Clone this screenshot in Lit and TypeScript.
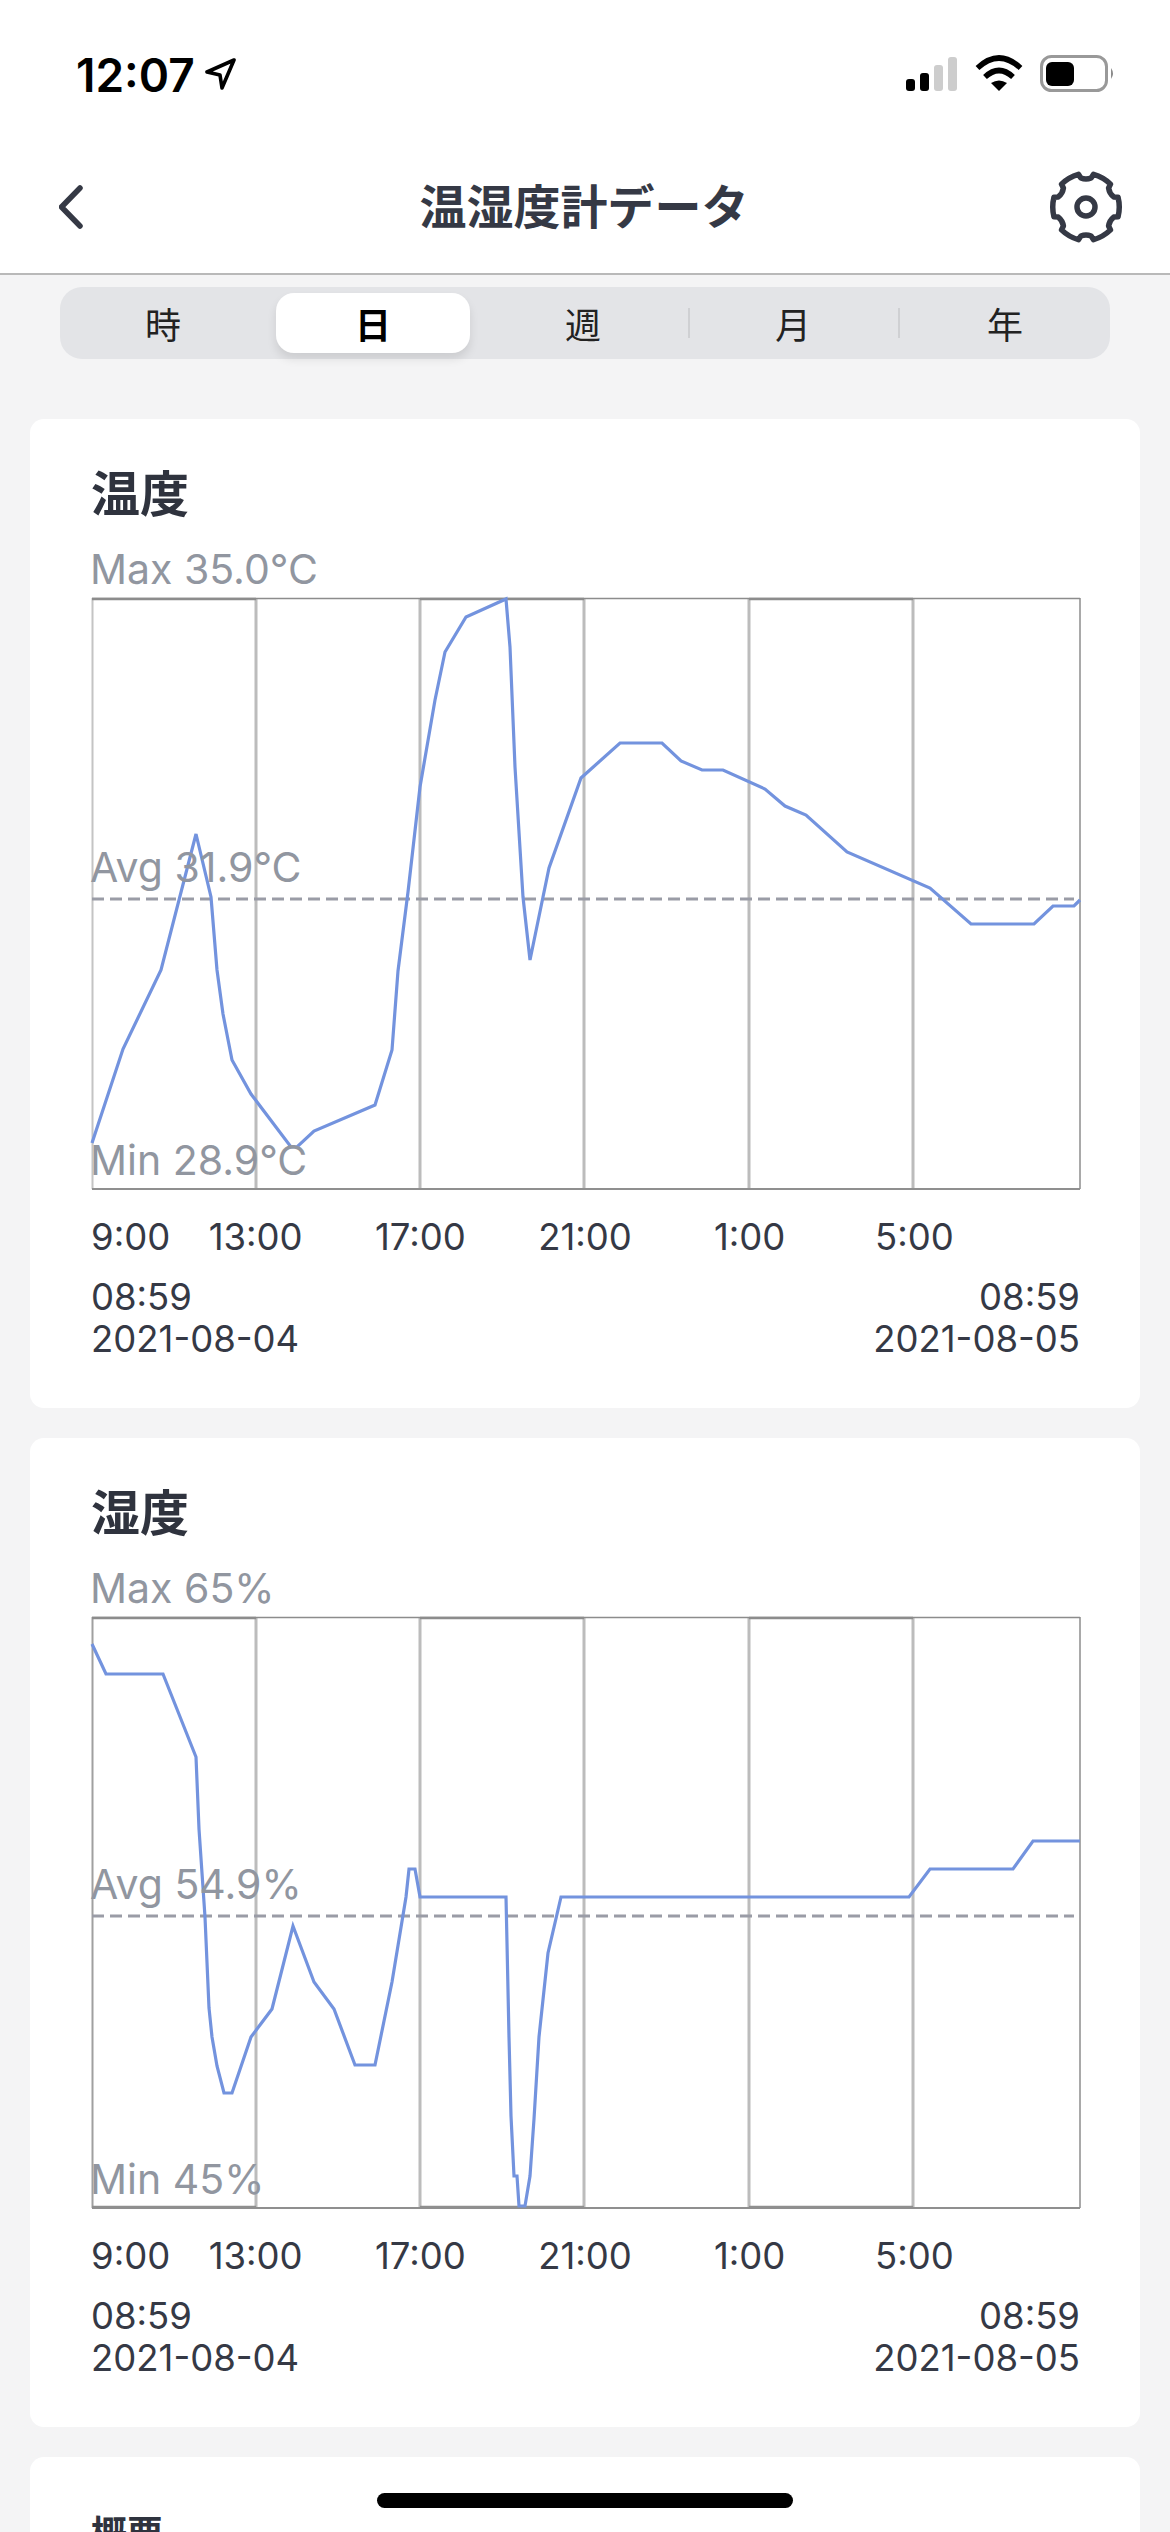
import { LitElement, html, css, svg } from 'lit';
import { customElement } from 'lit/decorators.js';

type Point = [number, number];

interface ChartData {
  title: string;
  max: string;
  avg: string;
  min: string;
  top: number; // y of the plot's top edge in the page
  avgY: number;
  heavyBottom: boolean;
  leftStroke: string;
  points: Point[];
  endDate: string;
}

const LEFT = 92;
const WIDTH = 988;
const HEIGHT = 591;
const GRID = [164, 328, 492, 657, 821];
const TICKS = ['9:00', '13:00', '17:00', '21:00', '1:00', '5:00'];
const SEGMENTS = ['時', '日', '週', '月', '年'];

const temperature: ChartData = {
  title: '温度',
  max: 'Max 35.0°C',
  avg: 'Avg 31.9°C',
  min: 'Min 28.9°C',
  top: 598,
  avgY: 301,
  heavyBottom: false,
  leftStroke: '#c4c4c4',
  endDate: '2021-08-05',
  points: [
    [92, 1143], [123, 1049], [161, 970], [196, 834], [211, 897], [217, 970], [223, 1014],
    [232, 1060], [251, 1094], [291, 1147], [297, 1147], [314, 1131], [375, 1105], [392, 1050],
    [398, 971], [408, 892], [420, 787], [435, 700], [445, 652], [466, 617], [506, 599],
    [510, 647], [515, 767], [523, 897], [530, 960], [543, 897], [549, 868], [581, 778],
    [620, 743], [662, 743], [681, 761], [702, 770], [723, 770], [765, 789], [785, 806],
    [806, 815], [847, 852], [930, 888], [971, 924], [1034, 924], [1053, 906], [1074, 906],
    [1080, 900],
  ],
};

const humidity: ChartData = {
  title: '湿度',
  max: 'Max 65%',
  avg: 'Avg 54.9%',
  min: 'Min 45%',
  top: 1618,
  avgY: 299,
  heavyBottom: true,
  leftStroke: '#a0a0a0',
  endDate: '2021-08-05',
  points: [
    [92, 1645], [106, 1675], [163, 1675], [196, 1758], [199, 1830], [205, 1918], [209, 2009],
    [212, 2038], [217, 2067], [224, 2094], [232, 2094], [251, 2038], [272, 2010], [293, 1927],
    [314, 1983], [334, 2010], [355, 2066], [375, 2066], [392, 1983], [406, 1898], [409, 1870],
    [415, 1870], [420, 1898], [506, 1898], [507, 1944], [509, 2038], [511, 2117], [514, 2177],
    [517, 2177], [519, 2207], [525, 2207], [530, 2177], [534, 2120], [539, 2038], [548, 1954],
    [561, 1898], [909, 1898], [930, 1870], [1013, 1870], [1033, 1842], [1080, 1842],
  ],
};

// six flat lobes with short, narrow scoops between them
function gearPath(cx: number, cy: number, outer: number, notch: number) {
  const at = (deg: number, r: number) => {
    const a = (deg * Math.PI) / 180;
    return `${(cx + r * Math.cos(a)).toFixed(2)} ${(cy + r * Math.sin(a)).toFixed(2)}`;
  };
  let d = `M${at(-17, outer)}`;
  for (let i = 0; i < 6; i++) {
    const a = i * 60;
    d += ` Q${at(a, outer + 1)} ${at(a + 17, outer)}`;
    d += ` L${at(a + 20, outer - 4)}`;
    d += ` Q${at(a + 30, notch)} ${at(a + 40, outer - 4)}`;
    d += ` L${at(a + 43, outer)}`;
  }
  return d + ' Z';
}

@customElement('app-root')
export class AppRoot extends LitElement {
  static styles = css`
    :host {
      display: block;
      position: relative;
      width: 1170px;
      height: 2532px;
      overflow: hidden;
      background: #f4f4f5;
      font-family: Inter, 'Noto Sans CJK JP', sans-serif;
      color: #353945;
    }

    .top {
      background: #fff;
      border-bottom: 2px solid #b9b9b9;
      height: 275px;
      box-sizing: border-box;
    }

    .status {
      display: flex;
      height: 120px;
      box-sizing: border-box;
      padding: 55px 55px 0 76px;
      color: #000;
    }

    .time {
      font-size: 46px;
      font-weight: 600;
      line-height: 36px;
      height: 36px;
      margin-top: 2px;
    }

    .arrow {
      margin: 3px 0 0 10px;
    }

    .status-right {
      display: flex;
      gap: 17px;
      margin-left: auto;
    }

    .nav {
      display: grid;
      grid-template-columns: 1fr auto 1fr;
      align-items: center;
      height: 153px;
      box-sizing: border-box;
      padding: 20px 47px 0 59px;
    }

    .nav-title {
      margin: 0 14px 5px 0;
      font-family: 'Noto Sans CJK JP', sans-serif;
      font-size: 47px;
      font-weight: 700;
      line-height: 60px;
    }

    .nav .gear {
      justify-self: end;
    }

    .segments {
      display: grid;
      grid-template-columns: repeat(5, 1fr);
      height: 72px;
      margin: 12px 60px 60px;
      background: #e3e4e7;
      border-radius: 22px;
    }

    .segment {
      position: relative;
      display: flex;
      align-items: center;
      justify-content: center;
      margin: 6px 10px 6px 6px;
      border-radius: 18px;
      font-family: 'Noto Sans CJK JP', sans-serif;
      font-size: 36px;
      color: #222;
    }

    .segment:last-child {
      margin-right: 6px;
    }

    .segment.active {
      background: #fff;
      font-weight: 700;
      color: #000;
      box-shadow: 0 6px 10px rgba(0, 0, 0, 0.1);
    }

    .segment.sep::before {
      content: '';
      position: absolute;
      left: -8px;
      top: 15px;
      width: 2px;
      height: 30px;
      background: #cfd0d3;
    }

    .card {
      margin: 0 30px 30px;
      padding: 42px 60px 48px 62px;
      background: #fff;
      border-radius: 14px;
    }

    .card-title {
      margin-left: -1px;
      font-family: 'Noto Sans CJK JP', sans-serif;
      font-size: 49px;
      font-weight: 700;
      line-height: 60px;
      color: #2f333e;
    }

    .card-title.small {
      margin-top: 2px;
      font-size: 36px;
    }

    .stat {
      font-size: 41px;
      line-height: 48px;
      color: #9196a0;
    }

    .max {
      margin: 24px 0 5px -2px;
    }

    .plot {
      position: relative;
      height: 591px;
    }

    .plot svg {
      display: block;
      overflow: visible;
    }

    .plot .stat {
      position: absolute;
      left: -2px;
    }

    .plot .min {
      bottom: 5px;
    }

    .ticks {
      display: grid;
      grid-template-columns: repeat(6, 1fr);
      margin-top: 27px;
      font-size: 36.5px;
      line-height: 43px;
    }

    .ticks span {
      justify-self: start;
      transform: translateX(calc(-50% - 1px));
    }

    .ticks span:first-child {
      margin-left: -1px;
      transform: none;
    }

    .range {
      display: flex;
      justify-content: space-between;
      margin: 17px 0 0 -1px;
      font-size: 36.5px;
      line-height: 42px;
    }

    .range div:last-child {
      text-align: right;
    }

    .home {
      position: absolute;
      left: 377px;
      top: 2493px;
      width: 416px;
      height: 15px;
      border-radius: 8px;
      background: #000;
    }
  `;

  private renderPlot(data: ChartData) {
    const line = data.points.map(([x, y]) => `${x - LEFT},${y - data.top}`).join(' ');
    const edges = [0, ...GRID, WIDTH];
    return svg`
      <svg width=${WIDTH} height=${HEIGHT} viewBox="0 0 ${WIDTH} ${HEIGHT}">
        <line x1="0.5" y1="0" x2="0.5" y2=${HEIGHT} stroke=${data.leftStroke} stroke-width="2" />
        ${GRID.map((x) => svg`<line x1=${x} y1="0" x2=${x} y2=${HEIGHT} stroke="#bcbcbc" stroke-width="3" />`)}
        <line x1=${WIDTH} y1="0" x2=${WIDTH} y2=${HEIGHT} stroke="#8c8c8c" stroke-width="1.5" />
        <line x1="0" y1="0.5" x2=${WIDTH} y2="0.5" stroke="#8c8c8c" stroke-width="1.5" />
        <line x1="0" y1=${HEIGHT} x2=${WIDTH} y2=${HEIGHT} stroke="#8f8f8f" stroke-width="2" />
        ${[0, 2, 4].map((i) => svg`
          <line x1=${edges[i]} y1="1" x2=${edges[i + 1]} y2="1" stroke="#8c8c8c" stroke-width="2.5" />
          ${data.heavyBottom ? svg`<line x1=${edges[i]} y1=${HEIGHT - 1} x2=${edges[i + 1]} y2=${HEIGHT - 1} stroke="#8f8f8f" stroke-width="2.5" />` : ''}
        `)}
        <line x1="0" y1=${data.avgY} x2="982" y2=${data.avgY} stroke="#9a9ca6" stroke-width="3" stroke-dasharray="12 6" />
        <polyline points=${line} fill="none" stroke="#7393de" stroke-width="3.2" />
      </svg>
    `;
  }

  private renderCard(data: ChartData) {
    return html`
      <section class="card">
        <div class="card-title">${data.title}</div>
        <div class="stat max">${data.max}</div>
        <div class="plot">
          ${this.renderPlot(data)}
          <div class="stat" style="top: ${data.avgY - 56}px">${data.avg}</div>
          <div class="stat min">${data.min}</div>
        </div>
        <div class="ticks">${TICKS.map((t) => html`<span>${t}</span>`)}</div>
        <div class="range">
          <div>08:59<br />2021-08-04</div>
          <div>08:59<br />${data.endDate}</div>
        </div>
      </section>
    `;
  }

  render() {
    return html`
      <div class="top">
        <div class="status">
          <div class="time">12:07</div>
          <svg class="arrow" width="32" height="32" viewBox="0 0 32 32">
            <path d="M29 2 L2 14 L15 17 L17 30 Z" fill="none" stroke="#000" stroke-width="3.6" stroke-linejoin="round" />
          </svg>
          <div class="status-right">
            <svg width="52" height="36" viewBox="0 0 52 36">
              <rect x="0" y="24" width="9" height="12" rx="3" fill="#000" />
              <rect x="14" y="18" width="9" height="18" rx="3" fill="#000" />
              <rect x="28" y="10" width="9" height="26" rx="3" fill="#cdcdcd" />
              <rect x="42" y="2" width="9" height="34" rx="3" fill="#cdcdcd" />
            </svg>
            <svg width="48" height="36" viewBox="0 0 48 36">
              <path d="M2.5 13 Q24 -7 45.5 13" fill="none" stroke="#000" stroke-width="5.5" />
              <path d="M10 22 Q24 9 38 22" fill="none" stroke="#000" stroke-width="5.5" />
              <path d="M24 36 L16 28 Q24 23 32 28 Z" fill="#000" />
            </svg>
            <svg width="75" height="37" viewBox="0 0 75 37">
              <rect x="1.5" y="1.5" width="65" height="34" rx="10" fill="none" stroke="#999" stroke-width="3" />
              <rect x="6" y="7" width="28" height="24" rx="6" fill="#000" />
              <path d="M71 13 Q75 18.5 71 24 Z" fill="#8c8c8c" />
            </svg>
          </div>
        </div>
        <div class="nav">
          <svg width="24" height="44" viewBox="0 0 24 44">
            <path d="M21 3 L2.5 22 L21 41" fill="none" stroke="#353945" stroke-width="5.5" stroke-linecap="round" stroke-linejoin="round" />
          </svg>
          <div class="nav-title">温湿度計データ</div>
          <svg class="gear" width="74" height="74" viewBox="0 0 74 74">
            <path d=${gearPath(37, 37, 33.5, 27)} fill="none" stroke="#353945" stroke-width="5.5" stroke-linejoin="round" />
            <circle cx="37" cy="37" r="9" fill="none" stroke="#353945" stroke-width="5.5" />
          </svg>
        </div>
      </div>
      <div class="segments">
        ${SEGMENTS.map((s, i) => html`
          <div class="segment ${i === 1 ? 'active' : ''} ${i > 2 ? 'sep' : ''}">${s}</div>
        `)}
      </div>
      ${this.renderCard(temperature)}
      ${this.renderCard(humidity)}
      <section class="card">
        <div class="card-title small">概要</div>
      </section>
      <div class="home"></div>
    `;
  }
}
